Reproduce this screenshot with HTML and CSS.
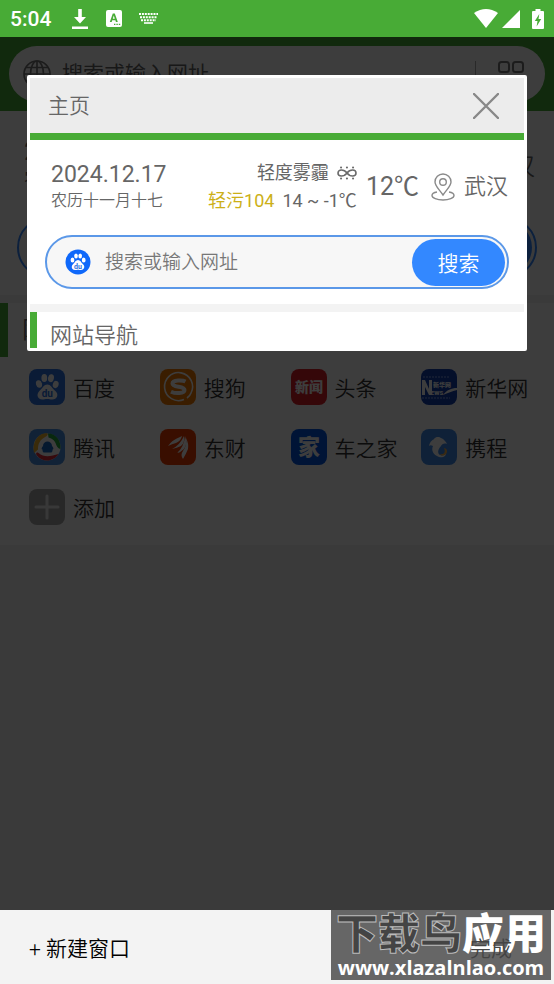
FILE: index.html
```
<!DOCTYPE html>
<html lang="zh-CN">
<head>
    <meta charset="UTF-8">
    <meta name="viewport" content="width=device-width, initial-scale=1.0">
    <title>主页</title>
    <link rel="stylesheet" href="styles.css">
</head>
<body>
    <header class="status-bar">
        <span class="clock">5:04</span>
        <svg class="st-download" width="16" height="20" viewBox="0 0 16 20" fill="#fff"><path d="M6.2 0h3.6v8H14l-6 6.5L2 8h4.2zM0 17.6h16V20H0z"/></svg>
        <svg class="st-app" width="16" height="17" viewBox="0 0 16 17"><rect width="16" height="17" rx="2" fill="#fff"/><path fill="#48ab36" fill-rule="evenodd" d="M6.8 3.4h2l3 8.6H9.9l-.5-1.7H6.2L5.7 12H3.8zM7.8 5.4l-1 3.4h2z"/><path fill="#48ab36" d="M8 13.7h1.4V15H8zM10.4 13.7h1.4V15h-1.4zM12.8 13.7h1.4V15h-1.4z"/></svg>
        <svg class="st-keyboard" width="19" height="11" viewBox="0 0 19 11" fill="none" stroke="#fff"><path stroke-width="2" stroke-dasharray="2 .9" d="M0 1h19M1 4.2h17M2 7.2h15"/><path stroke-width="1.6" d="M5 10h9"/></svg>
        <span class="spacer"></span>
        <svg width="24" height="19" viewBox="0 0 24 19" fill="#fff"><path d="M0 4Q12-4 24 4L12 19z"/></svg>
        <svg class="st-signal" width="18" height="18" viewBox="0 0 18 18" fill="#fff"><path d="M18 0v18H0z"/></svg>
        <svg class="st-battery" width="12" height="20" viewBox="0 0 12 20"><path fill="#fff" d="M3.5 0h5v2H11a1 1 0 0 1 1 1v16a1 1 0 0 1-1 1H1a1 1 0 0 1-1-1V3a1 1 0 0 1 1-1h2.5z"/><path fill="#48ab36" d="M7.3 5L2.8 12h2.7L4.6 17.5 9.2 10H6.5z"/></svg>
    </header>

    <main class="screen">
        <div class="home">
            <div class="top-bar">
                <form class="address">
                    <svg width="28" height="28" viewBox="0 0 28 28" fill="none" stroke="#777" stroke-width="1.7"><circle cx="14" cy="14" r="13"/><ellipse cx="14" cy="14" rx="6.5" ry="13"/><path d="M14 1v26M3 7.5h22M1 14h26M3 20.5h22"/></svg>
                    <input type="text" aria-label="网址" placeholder="搜索或输入网址">
                    <button type="button" class="apps" aria-label="应用"><svg width="26" height="26" viewBox="0 0 26 26" fill="none" stroke="#777" stroke-width="2"><rect x="1" y="1" width="10" height="10" rx="2.5"/><rect x="15" y="1" width="10" height="10" rx="2.5"/><rect x="1" y="15" width="10" height="10" rx="2.5"/><rect x="15" y="15" width="10" height="10" rx="2.5"/></svg></button>
                </form>
            </div>
            <section class="weather">
                <div class="dates">
                    <div class="date">2024.12.17</div>
                    <div class="lunar">农历十一月十七</div>
                </div>
                <div class="city">武汉</div>
            </section>
            <form class="search">
                <input type="text" aria-label="搜索">
                <button type="button" aria-label="搜索"></button>
            </form>
            <h2 class="section-title">网站导航</h2>
            <nav class="sites">
                <a href="#"><svg viewBox="0 0 36 36"><rect width="36" height="36" rx="8" fill="#2a70e0"/><g fill="#fff"><ellipse cx="10" cy="15" rx="3" ry="3.8" transform="rotate(-15 10 15)"/><ellipse cx="15.3" cy="9" rx="2.9" ry="4"/><ellipse cx="22" cy="9.2" rx="2.9" ry="4" transform="rotate(12 22 9.2)"/><ellipse cx="26.7" cy="15.5" rx="2.9" ry="3.7" transform="rotate(15 26.7 15.5)"/><path d="M18.3 15.5c3.5 0 4.5 3.5 7.5 6 5 4 2 9-2.5 9-2.5 0-3-.5-5-.5s-3 .5-5 .5c-5 0-6.500-5.500-2.500-9 3-2.500 4-6 7.500-6z"/></g><text class="du" x="18.3" y="28">du</text></svg>百度</a>
                <a href="#"><svg viewBox="0 0 36 36"><rect width="36" height="36" rx="8" fill="#f37900"/><path d="M24 30.500A14 14 0 1 1 31 24q-1 3-4 5" fill="none" stroke="#fff" stroke-width="1.6"/><path d="M25.500 12.500c-2.500-1.300-13-2-13 2 0 4.500 12 2 12 6.500 0 4-9.500 3.500-13.500 1.700" fill="none" stroke="#fff" stroke-width="4"/></svg>搜狗</a>
                <a href="#"><svg viewBox="0 0 36 36"><rect width="36" height="36" rx="8" fill="#dc2029"/><text class="logo-text" x="18" y="23" font-size="14">新闻</text></svg>头条</a>
                <a href="#"><svg viewBox="0 0 36 36"><rect width="36" height="36" rx="8" fill="#123fae"/><path d="M2 8h27M1 29h28" stroke="#8aa5e8" stroke-dasharray="2 1"/><path fill="#fff" d="M1 11h3l4 9v-9h3v15H8l-4-8v8H1zM22 26c4-5 8-7 14-7v2c-5 1-9 3-14 5z"/><text class="logo-text" x="21" y="18" font-size="6">新华网</text><text class="logo-text" x="16" y="26" font-size="6">EWS</text></svg>新华网</a>
                <a href="#"><svg viewBox="0 0 36 36"><rect width="36" height="36" rx="8" fill="#4a90e2"/><circle cx="18" cy="18" r="13.5" fill="#fff"/><path d="M5 24C3 14 8 6 15 4.500c4-1 5 1 2 3-6 3-8 7-8 13z" fill="#f2b52b"/><path d="M19 4.500c8 0 13 7 12.500 15-1 1-3-1-4-3-1.500-5-4-7-8-8z" fill="#22a63b"/><path d="M29.500 25c-5 8-16 9-22 1-1-2 0-3 2-2 6 5 13 3 20 1z" fill="#e12b38"/><path d="M14 17c0-6 9-6 9 0 2 2 1.500 3.500.5 3.500 0 1.500 0 2-1 3h-8c-1-1-1-1.500-1-3-1.500 0-1-2 .5-3.500z" fill="#1768c5"/></svg>腾讯</a>
                <a href="#"><svg viewBox="0 0 36 36"><rect width="36" height="36" rx="8" fill="#ee3c00"/><g fill="#fff"><path d="M8 17q4-6 12-9l2-1q-1 5-6 7-4 1-8 3z"/><path d="M12 20q8-4 12-13 1 7-3 10-4 2-9 3z"/><path d="M17 24q7-6 8-17 3 8-1 13-3 3-7 4z"/><path d="M23 30q-3-4 0-8 4-5 3-13 3 6 2 11-2 5-5 10z"/></g></svg>东财</a>
                <a href="#"><svg viewBox="0 0 36 36"><rect width="36" height="36" rx="8" fill="#0055df"/><text class="logo-text" x="18" y="26" font-size="22">家</text></svg>车之家</a>
                <a href="#"><svg viewBox="0 0 36 36"><rect width="36" height="36" rx="8" fill="#3f8be8"/><path fill="#fff" d="M8 17c1-5 4-6 5-7 2-3 6-2 7-1 3 1 5 4 6 6-3-1-5 0-6 2-3 3-4 7-1 9 2 1 5 0 6-2 0 4-4 5-7 4-6-2-8-7-6-11-2-1-3-1-4 0z"/><path fill="#f2b14c" d="M23 19c3 0 4 4 2 6-2 2-5 2-6 0 4 1 6-2 4-6z"/></svg>携程</a>
                <a href="#"><svg viewBox="0 0 36 36"><rect width="36" height="36" rx="8" fill="#a8a8a8"/><path d="M18 7v22M7 18h22" stroke="#e8e8e8" stroke-width="3" stroke-linecap="round"/></svg>添加</a>
            </nav>
        </div>

        <div class="overlay">
            <article class="tab-card">
                <div class="tab-head">
                    <span>主页</span>
                    <button type="button" class="close" aria-label="关闭"><svg width="26" height="26" viewBox="0 0 26 26" stroke="#888" stroke-width="2.4" stroke-linecap="round"><path d="M1 1l24 24M25 1L1 25"/></svg></button>
                </div>
                <section class="weather">
                    <div class="dates">
                        <div class="date">2024.12.17</div>
                        <div class="lunar">农历十一月十七</div>
                    </div>
                    <div class="conditions">
                        <div class="haze">轻度雾霾 <svg width="20" height="14" viewBox="0 0 20 14" fill="none" stroke="#6a6a6a" stroke-width="1.6"><path d="M10 7C7 3 1 3 1 7s6 4 9 0 9-4 9 0-6 4-9 0z"/><path stroke-linecap="round" stroke-width="2" d="M4 1.5h.1M9.9 1.5h.1M16 1.5h.1M4 12.5h.1M9.9 12.5h.1M16 12.5h.1"/></svg></div>
                        <div class="air"><span class="aqi">轻污104</span><span>14 ~ -1℃</span></div>
                    </div>
                    <div class="temp">12℃</div>
                    <svg class="pin" width="24" height="28" viewBox="0 0 24 28" fill="none" stroke="#8a8a8a" stroke-width="1.4"><path d="M12 22C8 16 4 13 4 9a8 8 0 0 1 16 0c0 4-4 7-8 13z"/><circle cx="12" cy="9" r="3.3"/><path d="M6 19c-3 .5-5 1.5-5 3.5C1 25 6 27 12 27s11-2 11-4.500c0-2-2-3-5-3.500"/></svg>
                    <div class="city">武汉</div>
                </section>
                <form class="search">
                    <svg width="26" height="26" viewBox="0 0 26 26"><circle cx="13" cy="13" r="12.5" fill="#0f68fa"/><g fill="#fff"><ellipse cx="7.5" cy="11" rx="1.9" ry="2.5"/><ellipse cx="11" cy="7" rx="1.8" ry="2.5"/><ellipse cx="15.2" cy="7" rx="1.8" ry="2.5"/><ellipse cx="18.7" cy="11" rx="1.9" ry="2.5"/><path d="M13 11c2.300 0 3 2.300 4.800 4 3 2.700 1 6-1.800 6-1.300 0-1.700-.3-3-.3s-1.700.3-3 .3c-3 0-4.500-3.500-1.800-6 1.800-1.700 2.500-4 4.800-4z"/></g><text class="du du-small" x="13" y="19.5">du</text></svg>
                    <input type="text" aria-label="搜索" placeholder="搜索或输入网址">
                    <button type="button">搜索</button>
                </form>
                <h2 class="section-title">网站导航</h2>
            </article>
        </div>
    </main>

    <footer class="tab-actions">
        <button type="button">+ 新建窗口</button>
        <button type="button" class="done">完成</button>
        <div class="watermark">
            <div class="mark-name"><span>下载鸟</span>应用</div>
            <div class="mark-url">www.xlazalnlao.com</div>
        </div>
    </footer>
</body>
</html>
```
FILE: styles.css
```
* {
    box-sizing: border-box;
}
body {
    margin: 0;
    min-height: 100vh;
    display: flex;
    flex-direction: column;
    background-color: #f3f3f3;
    color: #666;
    font-family: Roboto, "Noto Sans CJK SC", sans-serif;
}
button, input {
    font: inherit;
    color: inherit;
    border: none;
    background: none;
    padding: 0;
}
input {
    flex: 1;
    min-width: 0;
    outline: none;
}
svg {
    display: block;
    flex-shrink: 0;
}

/* status bar */
.status-bar {
    display: flex;
    align-items: center;
    height: 37px;
    padding: 0 10px;
    background-color: #48ab36;
}
.clock {
    color: #fff;
    font-size: 21px;
    font-weight: 500;
}
.st-download {
    margin-left: 21px;
}
.st-app {
    margin-left: 18px;
}
.st-keyboard {
    margin-left: 17px;
}
.spacer {
    flex: 1;
}
.st-signal {
    margin-left: 4px;
}
.st-battery {
    margin-left: 12px;
}

/* home page */
.screen {
    position: relative;
    flex: 1;
}
.home {
    background-color: #fff;
    border-bottom: 1px solid #f3f3f3;
}
.top-bar {
    padding: 9px;
    background-color: #48ab36;
}
.address {
    display: flex;
    align-items: center;
    gap: 11px;
    height: 56px;
    padding: 0 21px 0 14px;
    border-radius: 28px;
    background-color: #fff;
    font-size: 21px;
}
.address input::placeholder {
    color: #666;
}
.apps {
    height: 26px;
    padding-left: 22px;
    border-left: 1px solid #aaa;
}
.weather {
    display: flex;
    align-items: center;
    height: 106px;
    padding: 0 19px 0 24px;
}
.dates {
    flex: 1;
}
.date {
    font-size: 26px;
    line-height: 32px;
}
.lunar {
    font-size: 19px;
    line-height: 26px;
    font-weight: 350;
}
.city {
    font-size: 24px;
    font-weight: 350;
}
.search {
    display: flex;
    align-items: center;
    height: 61px;
    margin: 0 17px 17px;
    padding: 3px;
    border: 2px solid #3388ff;
    border-radius: 31px;
    background-color: #f7f7f7;
}
.search button {
    width: 104px;
    height: 53px;
    border-radius: 27px;
    background-color: #3388ff;
    color: #fff;
    font-size: 21px;
    font-weight: 350;
}
.section-title {
    margin: 0;
    padding-left: 22px;
    border-top: 8px solid #f3f3f3;
    font-size: 24px;
    font-weight: 350;
    line-height: 54px;
    position: relative;
}
.section-title::before {
    content: "";
    position: absolute;
    left: 0;
    top: 0;
    bottom: 0;
    width: 8px;
    background-color: #48ab36;
}
.sites {
    display: grid;
    grid-template-columns: repeat(4, 1fr);
    padding: 0 2px 8px 29px;
}
.sites a {
    display: flex;
    align-items: center;
    gap: 8px;
    height: 60px;
    color: #333;
    font-size: 21px;
    font-weight: 350;
    text-decoration: none;
    white-space: nowrap;
}
.sites svg {
    width: 36px;
    height: 36px;
}
.du {
    fill: #2a70e0;
    font-size: 10px;
    font-weight: 700;
    text-anchor: middle;
}
.du-small {
    font-size: 7px;
}
.logo-text {
    fill: #fff;
    font-weight: 900;
    text-anchor: middle;
}

/* open tabs */
.overlay {
    position: absolute;
    inset: 0;
    padding: 38px 27px 0;
    background-color: rgba(0, 0, 0, 0.76);
}
.tab-card {
    border: 3px solid #fff;
    border-radius: 2px;
    background-color: #fff;
}
.tab-head {
    display: flex;
    align-items: center;
    justify-content: space-between;
    height: 62px;
    padding: 0 25px 0 18px;
    border-bottom: 7px solid #48ab36;
    background-color: #ececec;
    font-size: 21px;
    font-weight: 350;
    line-height: 24px;
}
.tab-card .weather {
    height: 95px;
    padding: 0 16px 2px 21px;
}
.tab-card .date {
    font-size: 23px;
    line-height: 28px;
}
.tab-card .lunar {
    font-size: 16px;
    line-height: 24px;
}
.conditions {
    font-size: 18px;
    line-height: 28px;
}
.haze, .air {
    display: flex;
    align-items: center;
    justify-content: flex-end;
    gap: 8px;
}
.aqi {
    color: #ccb018;
}
.temp {
    margin-left: 9px;
    font-size: 25px;
    line-height: 28px;
}
.pin {
    margin: 0 9px 0 12px;
}
.tab-card .city {
    font-size: 22px;
    line-height: 28px;
}
.tab-card .search {
    height: 54px;
    margin: 0 15px 15px;
    padding: 0 2px 0 18px;
    border-color: #5b98e8;
}
.tab-card .search input {
    padding-left: 14px;
    font-size: 19px;
    font-weight: 350;
}
.search input::placeholder {
    color: #777;
}
.tab-card .search button {
    width: 93px;
    height: 47px;
}
.tab-card .section-title {
    padding-left: 20px;
    height: 44px;
    font-size: 22px;
    line-height: 48px;
    overflow: hidden;
}
.tab-card .section-title::before {
    width: 7px;
}

/* bottom bar */
.tab-actions {
    position: relative;
    display: flex;
    align-items: center;
    justify-content: space-between;
    height: 74px;
    padding: 0 42px 0 29px;
    background-color: #f3f3f3;
    color: #000;
    font-size: 21px;
    font-weight: 350;
}
.done {
    position: relative;
    z-index: 1;
    color: #444;
}
.watermark {
    position: absolute;
    top: 0;
    right: 3px;
    width: 220px;
    height: 70px;
    background-color: #666;
    color: #fff;
    text-align: center;
    white-space: nowrap;
}
.mark-name {
    font-size: 42px;
    font-weight: 900;
    line-height: 49px;
}
.mark-name span {
    color: #444;
    -webkit-text-stroke: 1px #bbb;
}
.mark-url {
    font-family: "Open Sans", sans-serif;
    font-size: 20px;
    font-weight: 700;
    line-height: 18px;
}
```
